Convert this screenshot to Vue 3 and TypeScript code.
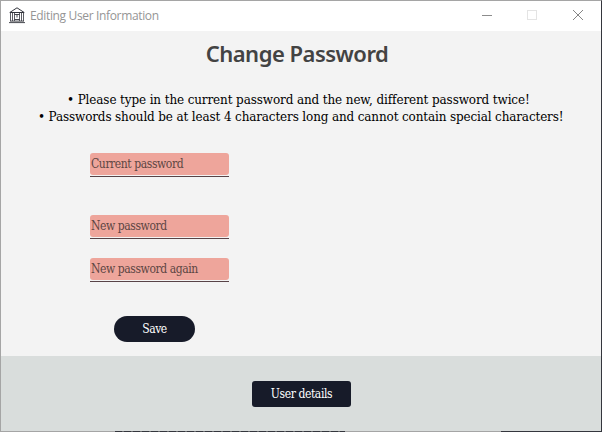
<script setup lang="ts">
import { ref } from 'vue'

const current = ref('')
const next = ref('')
const repeat = ref('')
</script>

<template>
  <div class="window">
    <header class="titlebar">
      <svg class="app-icon" width="16" height="17" viewBox="0 0 16 17" fill="none" stroke="#33353d">
        <path d="M.8 5.500 8 .8l7.200 4.700z" />
        <path d="M1.500 6v8M3.500 6v8M5.500 6v8M10.500 6v8M12.500 6v8M14.500 6v8" stroke-width=".8" />
        <path d="M5.500 7.500h5M8 7.500v3M5.500 12.500h5M1 14.100h14M0 15.600h16" stroke-width=".9" />
      </svg>
      <span class="caption">Editing User Information</span>
      <svg class="controls" width="104" height="12" viewBox="0 0 104 12" fill="none" shape-rendering="crispEdges">
        <path d="M0 6.500h10" stroke="#8c8c8c" />
        <path d="M45.500 1.500h9v9h-9z" stroke="#e4e4e4" />
        <path d="M91 1 101 11M101 1 91 11" stroke="#858585" shape-rendering="auto" />
      </svg>
    </header>

    <main class="body">
      <h1>Change Password</h1>
      <div class="rules">
        <p class="rule first">• Please type in the current password and the new, different password twice!</p>
        <p class="rule second">• Passwords should be at least 4 characters long and cannot contain special characters!</p>
      </div>
      <form class="form" @submit.prevent>
        <div class="field current"><input v-model="current" type="password" placeholder="Current password" /></div>
        <div class="field new"><input v-model="next" type="password" placeholder="New password" /></div>
        <div class="field"><input v-model="repeat" type="password" placeholder="New password again" /></div>
        <button class="save" type="submit">Save</button>
      </form>
    </main>

    <footer class="footer">
      <button class="details" type="button">User details</button>
    </footer>
    <div class="edge"><i class="seg light"></i><i class="seg dark"></i><i class="seg mid"></i><i class="seg end"></i></div>
  </div>
</template>

<style>
body { margin: 0; overflow: hidden; }
</style>

<style scoped>
* { box-sizing: border-box; }
.window {
  width: 602px;
  height: 432px;
  display: flex;
  flex-direction: column;
  border: 1px solid #a5a5a5;
  border-right-color: #34363d;
  border-bottom: 0;
  background: #f3f3f3;
  font-family: "DejaVu Serif Condensed", "DejaVu Serif", serif;
}
.titlebar {
  height: 30px;
  flex: none;
  display: flex;
  align-items: center;
  padding: 0 15px 2px 8px;
  background: #fff;
}
.app-icon { margin-top: 1px; }
.caption {
  margin-left: 5px;
  padding-top: 2px;
  font: 12px/16px "Open Sans", sans-serif;
  letter-spacing: -0.35px;
  color: #959595;
  white-space: nowrap;
}
.controls { margin-left: auto; }
.body { height: 325px; flex: none; }
h1 {
  margin: 6px 0 0;
  padding-right: 8px;
  font: 600 22px/32px "Noto Sans", sans-serif;
  letter-spacing: -0.5px;
  color: #434343;
  text-align: center;
}
.rules { margin-top: 23px; color: #000; }
.rule {
  margin: 0;
  font-family: "DejaVu Serif", serif;
  font-size: 12px;
  line-height: 17px;
  white-space: nowrap;
}
.first { padding-left: 66px; letter-spacing: -0.12px; }
.second { padding-left: 37px; letter-spacing: -0.14px; }
.form {
  display: flex;
  flex-direction: column;
  align-items: flex-start;
  padding: 27px 0 0 89px;
}
.field {
  width: 139px;
  height: 24px;
  border-bottom: 1px solid #584347;
}
.field.current { margin-bottom: 38px; }
.field.new { margin-bottom: 19px; }
input {
  display: block;
  width: 139px;
  height: 22px;
  margin: 0;
  padding: 0 1px;
  border: 0;
  border-radius: 3px;
  outline: 0;
  background: #eea59b;
  font: inherit;
  font-size: 12px;
  letter-spacing: -0.42px;
  color: #5d4543;
}
input::placeholder { color: #5d4543; opacity: 1; }
button {
  padding: 0;
  border: 0;
  background: #171b29;
  color: #fff;
  font: 12px/26px "DejaVu Serif Condensed", "DejaVu Serif", serif;
  letter-spacing: -0.4px;
  height: 26px;
}
.save { width: 81px; margin: 34px 0 0 24px; border-radius: 13px; }
.footer {
  height: 75px;
  flex: none;
  display: flex;
  justify-content: center;
  align-items: flex-start;
  padding: 25px 0 0 1px;
  background: #d9dddc;
}
.details { width: 99px; border-radius: 3px; }
.edge { height: 1px; display: flex; }
.seg { height: 1px; }
.light { width: 114px; background: #a5a5a5; }
.dark { width: 230px; background: repeating-linear-gradient(90deg, #34363d 0 7px, #66686b 7px 9px); }
.mid { width: 156px; background: #a5a5a5; }
.end { flex: 1; background: #34363d; }
</style>
